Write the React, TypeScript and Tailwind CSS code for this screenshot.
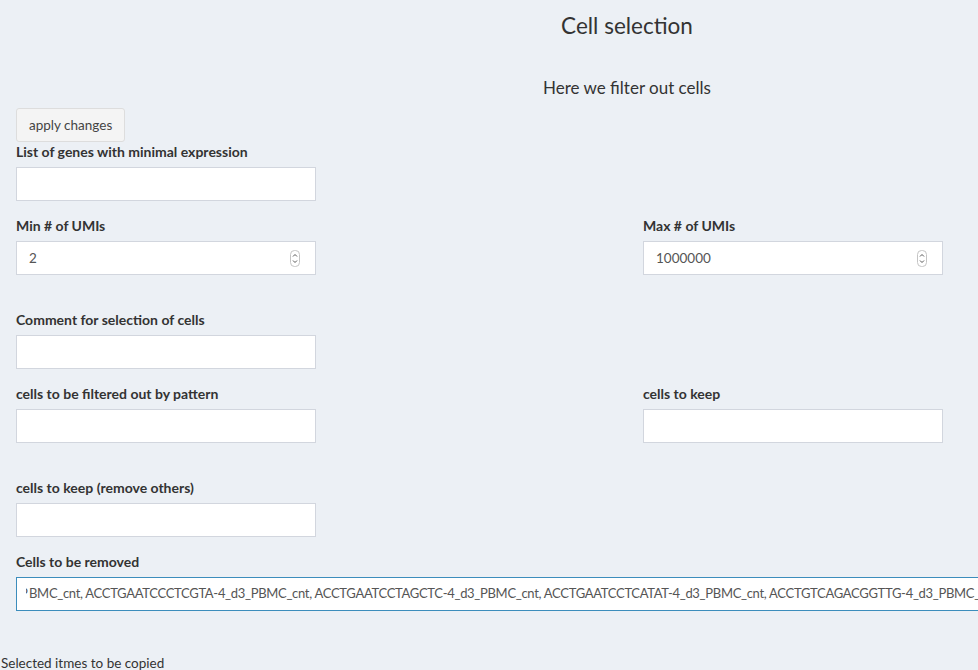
import React from "react";

const font = { fontFamily: '"Lato", "Liberation Sans", sans-serif' };

const cells =
  "PBMC_cnt, ACCTGAATCCCTCGTA-4_d3_PBMC_cnt, ACCTGAATCCTAGCTC-4_d3_PBMC_cnt, ACCTGAATCCTCATAT-4_d3_PBMC_cnt, ACCTGTCAGACGGTTG-4_d3_PBMC_cnt, ACCTGTCAGCATCATC-4_d3_PBMC_cnt";

function Label({ children }: { children: React.ReactNode }) {
  return <div className="text-[14px] leading-[20px] font-bold text-[#333] mb-[5px]">{children}</div>;
}

function TextBox() {
  return <div className="w-[300px] h-[34px] bg-white border border-[#d2d6de]" />;
}

function Spinner() {
  return (
    <svg width="10" height="17" viewBox="0 0 10 17" className="shrink-0">
      <rect x="0.5" y="0.5" width="9" height="16" rx="4" fill="none" stroke="#c4c4c4" />
      <path d="M3 6.5 L5 4.5 L7 6.5" fill="none" stroke="#555" strokeWidth="1" />
      <path d="M3 10.5 L5 12.5 L7 10.5" fill="none" stroke="#555" strokeWidth="1" />
    </svg>
  );
}

function NumberBox({ value }: { value: string }) {
  return (
    <div className="w-[300px] h-[34px] bg-white border border-[#d2d6de] flex items-center pl-[12px] pr-[15px] text-[13.5px] text-[#555]">
      <span className="flex-1">{value}</span>
      <Spinner />
    </div>
  );
}

export default function App() {
  return (
    <div className="w-full h-[670px] overflow-hidden bg-[#ecf0f5] text-[#333]" style={font}>
      <div className="w-[1254px]">
        <h3 className="text-center text-[22.5px] leading-[26px] pt-[13px] font-normal">Cell selection</h3>
        <p className="text-center text-[17px] leading-[22px] mt-[38px]">Here we filter out cells</p>

        <div className="px-[16px] mt-[9px]">
          <button className="h-[34px] px-[12px] text-[13.5px] bg-[#f4f4f4] border border-[#ddd] rounded-[3px] text-[#444]">
            apply changes
          </button>

          <Label>List of genes with minimal expression</Label>
          <TextBox />

          <div className="grid grid-cols-2 mt-[15px]">
            <div>
              <Label>Min # of UMIs</Label>
              <NumberBox value="2" />
            </div>
            <div className="pl-[16px]">
              <Label>Max # of UMIs</Label>
              <NumberBox value="1000000" />
            </div>
          </div>

          <div className="mt-[35px]">
            <Label>Comment for selection of cells</Label>
            <TextBox />
          </div>

          <div className="grid grid-cols-2 mt-[15px]">
            <div>
              <Label>cells to be filtered out by pattern</Label>
              <TextBox />
            </div>
            <div className="pl-[16px]">
              <Label>cells to keep</Label>
              <TextBox />
            </div>
          </div>

          <div className="mt-[35px]">
            <Label>cells to keep (remove others)</Label>
            <TextBox />
          </div>

          <div className="mt-[15px]">
            <Label>Cells to be removed</Label>
            <div className="h-[34px] bg-white border border-[#3c8dbc] overflow-hidden flex items-center pl-[9px]">
              <span className="whitespace-nowrap text-[13px] tracking-[-0.3px] text-[#555]">
                <span className="inline-block overflow-hidden w-[3px] align-bottom">
                  <span className="inline-block -ml-[6px]">P</span>
                </span>
                {cells.slice(1)}
              </span>
            </div>
          </div>
        </div>

        <div className="text-[13.5px] leading-[20px] mt-[42px] pl-[1px]">Selected itmes to be copied</div>
      </div>
    </div>
  );
}
